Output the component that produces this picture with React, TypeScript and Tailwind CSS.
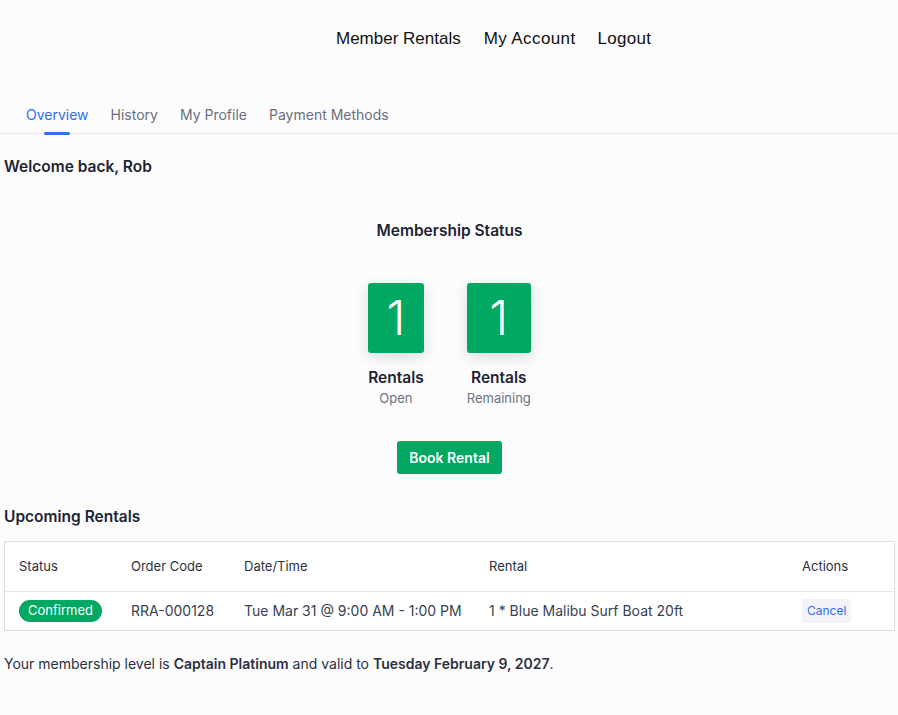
import React from 'react';

const tabs = ['Overview', 'History', 'My Profile', 'Payment Methods'];

const rentals = [
    {
        status: 'Confirmed',
        code: 'RRA-000128',
        when: 'Tue Mar 31 @ 9:00 AM - 1:00 PM',
        item: '1 * Blue Malibu Surf Boat 20ft',
    },
];

const StatBox = ({ value, label, sub }: { value: number; label: string; sub: string }) => (
    <div className="flex flex-col items-stretch">
        <div className="h-[70px] bg-[#00a862] rounded-[3px] shadow-[0_4px_14px_rgba(15,23,42,0.14)] flex items-center justify-center text-white text-[48px] font-light leading-none">
            {value}
        </div>
        <div className="mt-[13px] text-center text-[15.5px] leading-6 font-semibold text-[#1f2433]">{label}</div>
        <div className="text-center text-[13px] leading-4 text-[#6b7280]">{sub}</div>
    </div>
);

export default function App() {
    return (
        <div className="min-h-screen bg-[#fcfcfd] text-[#1f2433] font-['Inter','Noto_Sans',sans-serif]">
            <header className="h-[78px] flex items-center pl-[336px] font-['Liberation_Sans',Arial,sans-serif] text-[17px] text-[#111]">
                <a>Member Rentals</a>
                <a className="ml-[23px] tracking-[0.4px]">My Account</a>
                <a className="ml-[22px] tracking-[0.3px]">Logout</a>
            </header>

            <nav className="mt-[19px] flex pl-[15px] border-b border-[#e8e9ef]">
                {tabs.map((t, i) => (
                    <div
                        key={t}
                        className={`relative px-[11px] py-2 text-[14px] leading-5 ${i === 0 ? 'text-[#2f6fed]' : 'text-[#6b6f7d]'}`}
                    >
                        {t}
                        {i === 0 && (
                            <span className="absolute left-1/2 -translate-x-1/2 -bottom-[2px] w-[26px] h-[3px] rounded-full bg-[#2f6fed]" />
                        )}
                    </div>
                ))}
            </nav>

            <main className="pl-[4px] pr-[3px]">
                <h2 className="mt-[21px] text-[15.5px] leading-6 font-semibold">Welcome back, Rob</h2>

                <section className="flex flex-col items-center">
                    <h3 className="mt-10 text-[15.5px] leading-6 font-semibold">Membership Status</h3>
                    <div className="mt-[40px] flex gap-[43px]">
                        <StatBox value={1} label="Rentals" sub="Open" />
                        <StatBox value={1} label="Rentals" sub="Remaining" />
                    </div>
                    <button className="mt-[35px] h-[33px] px-3 rounded-[3px] bg-[#00a862] text-white text-[14px] font-semibold">
                        Book Rental
                    </button>
                </section>

                <h2 className="mt-[31px] text-[15.5px] leading-6 font-semibold">Upcoming Rentals</h2>

                <div className="mt-[12px] border border-[#dcdde4] bg-white">
                    <table className="w-full text-left table-fixed">
                        <colgroup>
                            <col className="w-[112px]" />
                            <col className="w-[113px]" />
                            <col className="w-[245px]" />
                            <col />
                            <col className="w-[106px]" />
                        </colgroup>
                        <thead className="text-[13px] text-[#2b3040]">
                            <tr className="h-[49px] border-b border-[#e6e7ec]">
                                <th className="pl-[14px] font-normal">Status</th>
                                <th className="pl-[14px] font-normal">Order Code</th>
                                <th className="pl-[14px] font-normal">Date/Time</th>
                                <th className="pl-[14px] font-normal">Rental</th>
                                <th className="pl-[14px] font-normal">Actions</th>
                            </tr>
                        </thead>
                        <tbody className="text-[14px] text-[#374151]">
                            {rentals.map((r) => (
                                <tr key={r.code} className="h-[39px]">
                                    <td className="pl-[14px]">
                                        <span className="inline-flex items-center h-[22px] px-[9px] rounded-full bg-[#00a862] text-white text-[13px]">
                                            {r.status}
                                        </span>
                                    </td>
                                    <td className="pl-[14px]">{r.code}</td>
                                    <td className="pl-[14px] whitespace-nowrap">{r.when}</td>
                                    <td className="pl-[14px]">{r.item}</td>
                                    <td className="pl-[14px]">
                                        <button className="h-6 px-[5px] rounded-[3px] bg-[#f2f3f8] text-[#2f6fed] text-[12px]">
                                            Cancel
                                        </button>
                                    </td>
                                </tr>
                            ))}
                        </tbody>
                    </table>
                </div>

                <p className="mt-[23px] text-[14px] leading-5 text-[#2b3040]">
                    Your membership level is <b className="font-semibold">Captain Platinum</b> and valid to{' '}
                    <b className="font-semibold">Tuesday February 9, 2027</b>.
                </p>
            </main>
        </div>
    );
}
